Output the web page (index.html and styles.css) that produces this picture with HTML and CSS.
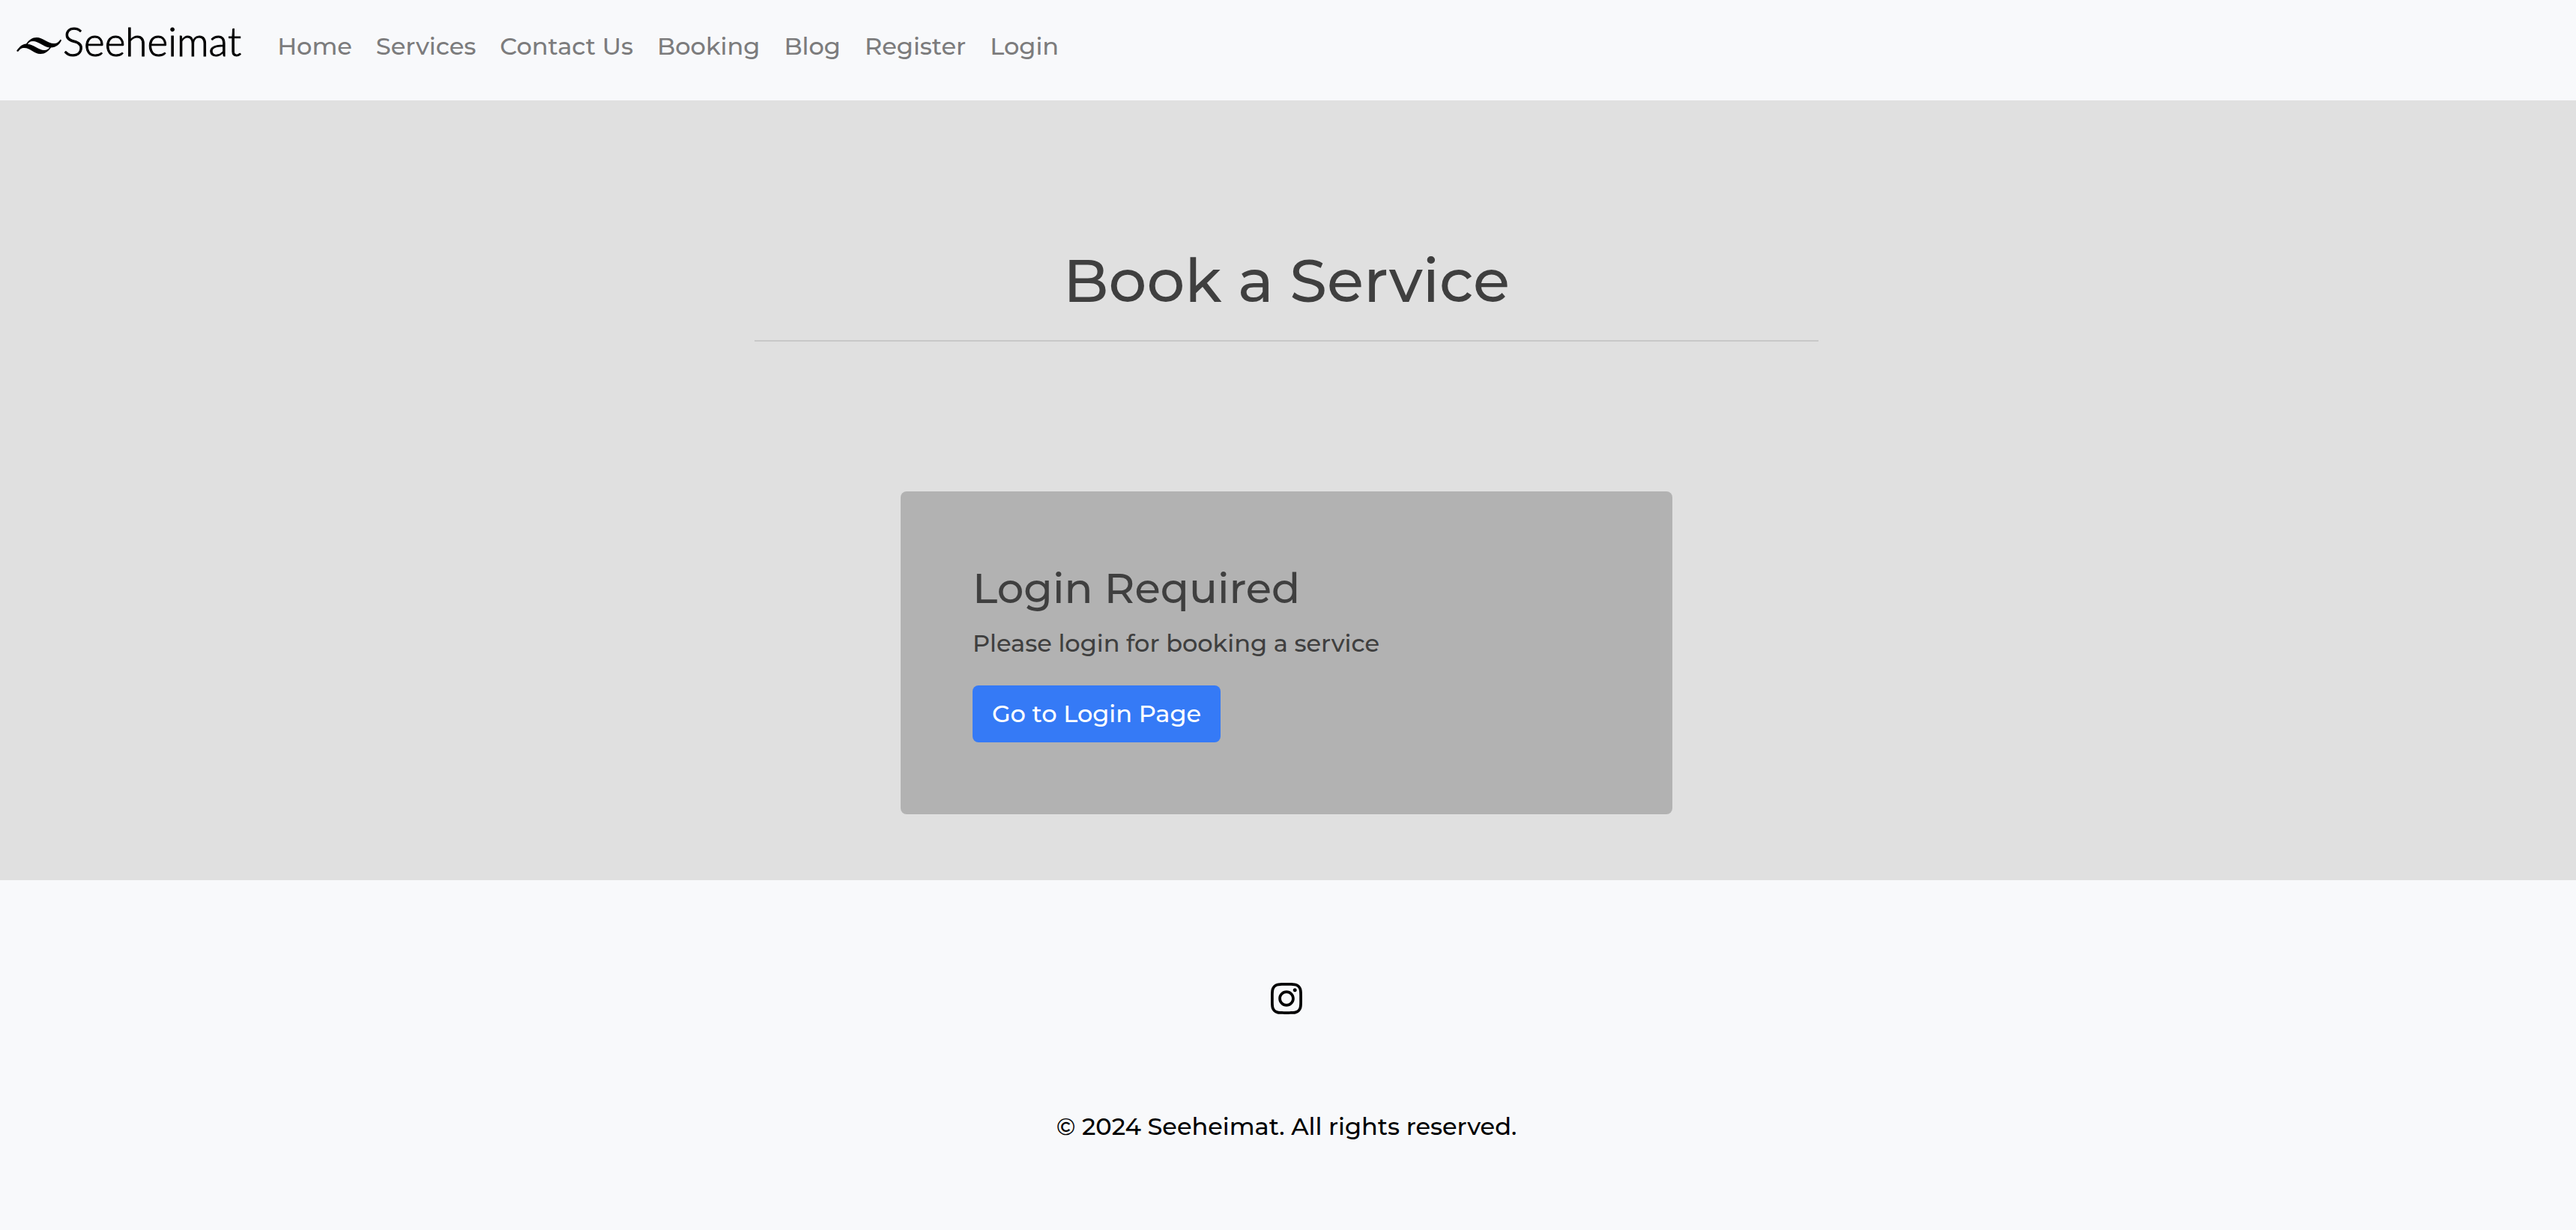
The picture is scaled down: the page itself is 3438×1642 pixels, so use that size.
FILE: index.html
```html
<!DOCTYPE html>
<html lang="en">
<head>
<meta charset="utf-8">
<meta name="viewport" content="width=device-width, initial-scale=1">
<title>Seeheimat</title>
<link rel="stylesheet" href="styles.css">
</head>
<body>
<header class="navbar">
  <a class="brand" href="#">
    <svg class="brand-mark" viewBox="0 0 60 24" aria-hidden="true">
      <path fill-rule="evenodd" d="M0 19 C5 12 8 10 13 9.500 C17 4 21 1 27 1 C35 1 43 10 51 9 C56 8.500 57 5 59 3.500 L60 5 C57 11 53 14 46 14.500 C42 20 38 23 32 23 C23 23 18 14 9 15 C5 15.500 4 18 2 20 Z M15 10 C22 10 30 18 37 18 C41 18 43 16 44 14.500 C37 14 29 6 22 6 C18 6 16 8 15 10 Z"/>
    </svg>
    <span class="brand-name">Seeheimat</span>
  </a>
  <nav class="nav">
    <a class="nav-link" href="#">Home</a>
    <a class="nav-link" href="#">Services</a>
    <a class="nav-link" href="#">Contact Us</a>
    <a class="nav-link" href="#">Booking</a>
    <a class="nav-link" href="#">Blog</a>
    <a class="nav-link" href="#">Register</a>
    <a class="nav-link" href="#">Login</a>
  </nav>
</header>
<main class="booking">
  <h1 class="page-title">Book a Service</h1>
  <section class="card">
    <h2 class="card-title">Login Required</h2>
    <p class="card-text">Please login for booking a service</p>
    <button class="btn" type="button">Go to Login Page</button>
  </section>
</main>
<footer class="footer">
  <a class="social" href="#" aria-label="Instagram">
    <svg class="social-icon" viewBox="0 0 448 512" aria-hidden="true"><path d="M224.100 141c-63.600 0-114.900 51.300-114.900 114.900s51.300 114.900 114.900 114.900S339 319.500 339 255.900 287.700 141 224.100 141zm0 189.600c-41.100 0-74.700-33.500-74.700-74.700s33.500-74.700 74.700-74.700 74.700 33.500 74.700 74.700-33.600 74.700-74.700 74.700zm146.400-194.300c0 14.900-12 26.800-26.800 26.800-14.900 0-26.800-12-26.800-26.800s12-26.800 26.800-26.800 26.800 12 26.800 26.800zm76.100 27.200c-1.700-35.900-9.900-67.700-36.200-93.900-26.200-26.200-58-34.400-93.900-36.200-37-2.100-147.900-2.100-184.900 0-35.800 1.700-67.600 9.900-93.900 36.100s-34.400 58-36.200 93.900c-2.100 37-2.100 147.900 0 184.900 1.700 35.900 9.900 67.700 36.200 93.900s58 34.400 93.900 36.200c37 2.100 147.900 2.100 184.900 0 35.900-1.700 67.700-9.900 93.900-36.200 26.200-26.200 34.400-58 36.200-93.900 2.100-37 2.100-147.800 0-184.800zM398.800 388c-7.800 19.600-22.900 34.700-42.600 42.600-29.500 11.700-99.500 9-132.100 9s-102.700 2.600-132.100-9c-19.600-7.800-34.700-22.900-42.600-42.600-11.700-29.500-9-99.500-9-132.100s-2.600-102.700 9-132.100c7.800-19.600 22.900-34.700 42.600-42.600 29.500-11.700 99.500-9 132.100-9s102.700-2.600 132.100 9c19.600 7.800 34.700 22.900 42.600 42.600 11.700 29.500 9 99.500 9 132.100s2.700 102.700-9 132.100z"/></svg>
  </a>
  <p class="copyright">© 2024 Seeheimat. All rights reserved.</p>
</footer>
</body>
</html>
```
FILE: styles.css
```css
*, *::before, *::after { box-sizing: border-box; }

body {
  margin: 0;
  background: #f8f9fb;
  color: #000;
  font-family: Montserrat, Inter, sans-serif;
  font-size: 32px;
  font-weight: 500;
  line-height: 48px;
}

a { color: inherit; text-decoration: none; }

.navbar {
  display: flex;
  align-items: flex-start;
  gap: 32px;
  min-height: 134px;
  padding: 16px 22px;
}

.brand {
  display: flex;
  align-items: center;
  height: 90px;
  gap: 2px;
}

.brand-mark { width: 60px; height: 24px; }

.brand-name {
  padding-bottom: 12px;
  font-family: Lato, sans-serif;
  font-size: 53px;
  font-weight: 300;
  -webkit-text-stroke: 1px #000;
}

.nav { display: flex; padding-top: 22px; }

.nav-link {
  padding: 0 16px;
  color: #7c7c7d;
}

.booking {
  display: flex;
  flex-direction: column;
  align-items: center;
  padding: 193px 4px 88px 0;
  background: #e0e0e0;
  color: #3f3f3f;
}

.page-title {
  width: 1420px;
  max-width: 100%;
  margin: 0;
  padding-bottom: 31px;
  border-bottom: 2px solid #c8c8c8;
  font-size: 80px;
  font-weight: 500;
  line-height: 96px;
  text-align: center;
}

.card {
  width: 30%;
  min-width: 680px;
  margin-top: 200px;
  padding: 96px;
  border-radius: 8px;
  background: #b2b2b2;
}

.card-title {
  margin: 0 0 16px;
  font-size: 56px;
  font-weight: 500;
  line-height: 67px;
}

.card-text { margin: 0 0 32px; }

.btn {
  display: block;
  padding: 14px 26px;
  border: 0;
  border-radius: 8px;
  background: #357af6;
  color: #fff;
  font: inherit;
}

.footer {
  display: flex;
  flex-direction: column;
  align-items: center;
  padding: 134px 4px 114px 0;
}

.social-icon { display: block; width: 42px; height: 48px; }

.copyright { margin: 123px 0 0; }
```
